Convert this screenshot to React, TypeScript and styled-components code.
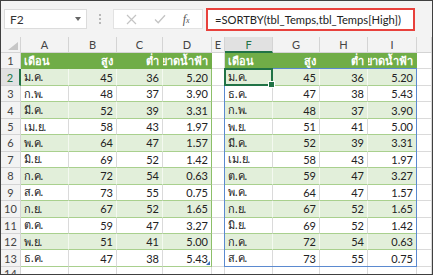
import React from 'react';
import styled, { createGlobalStyle } from 'styled-components';

const GlobalStyle = createGlobalStyle`
  html, body {
    margin: 0;
    padding: 0;
    background: #ffffff;
  }
  body {
    font-family: Lato, "Liberation Sans", "DejaVu Sans", sans-serif;
  }
`;

const GREEN = '#70ad47';
const BAND = '#e2efda';
const BAND_LINE = '#a9d08e';
const GRID = '#dadada';
const SELECT = '#217346';
const SPILL = '#5b8ad0';

type Row = [string, number, number, string];

const leftRows: Row[] = [
  ['ม.ค.', 45, 36, '5.20'],
  ['ก.พ.', 48, 37, '3.90'],
  ['มี.ค.', 52, 39, '3.31'],
  ['เม.ย.', 58, 43, '1.97'],
  ['พ.ค.', 64, 47, '1.57'],
  ['มิ.ย.', 69, 52, '1.42'],
  ['ก.ค.', 72, 54, '0.63'],
  ['ส.ค.', 73, 55, '0.75'],
  ['ก.ย.', 67, 52, '1.65'],
  ['ต.ค.', 59, 47, '3.27'],
  ['พ.ย.', 51, 41, '5.00'],
  ['ธ.ค.', 47, 38, '5.43'],
];

const rightRows: Row[] = [...leftRows].sort((a, b) => a[1] - b[1]);

const headers = ['เดือน', 'สูง', 'ต่ำ', 'หยาดน้ำฟ้า'];
const colLetters = ['A', 'B', 'C', 'D', 'E', 'F', 'G', 'H', 'I', ''];

const Frame = styled.div`
  width: 433px;
  height: 275px;
  box-sizing: border-box;
  border: 1px solid #404040;
  overflow: hidden;
  display: flex;
  flex-direction: column;
  background: #fff;
`;

const Toolbar = styled.div`
  height: 36px;
  flex: 0 0 36px;
  background: #f3f3f3;
  display: flex;
  align-items: center;
  padding-left: 3px;
  box-sizing: border-box;
`;

const NameBox = styled.div`
  width: 83px;
  height: 20px;
  box-sizing: border-box;
  background: #fff;
  border: 1px solid #dcdcdc;
  display: flex;
  align-items: center;
  justify-content: space-between;
  padding: 0 5px 0 5px;
  font-size: 12px;
  color: #333;
`;

const DropArrow = styled.span`
  width: 0;
  height: 0;
  border-left: 3.5px solid transparent;
  border-right: 3.5px solid transparent;
  border-top: 4px solid #666;
`;

const Grip = styled.div`
  width: 26px;
  display: flex;
  flex-direction: column;
  align-items: center;
  gap: 2px;
  span {
    width: 2px;
    height: 2px;
    background: #b8b8b8;
  }
`;

const Buttons = styled.div`
  width: 90px;
  height: 20px;
  box-sizing: border-box;
  background: #fff;
  border: 1px solid #e2e2e2;
  display: flex;
  align-items: center;
  justify-content: space-around;
  padding: 0 4px;
`;

const Fx = styled.span`
  font-family: "Liberation Serif", serif;
  font-style: italic;
  font-size: 12px;
  color: #555;
  sub {
    font-size: 8px;
    vertical-align: baseline;
  }
`;

const FormulaBox = styled.div`
  margin-left: 3px;
  width: 209px;
  height: 23px;
  box-sizing: border-box;
  border: 2px solid #e8413c;
  background: #fff;
  display: flex;
  align-items: center;
  padding-left: 7px;
  font-size: 11.2px;
  color: #222;
  white-space: nowrap;
  overflow: hidden;
`;

const Sheet = styled.div`
  position: relative;
  flex: 1;
  display: grid;
  grid-template-columns: 20px 48px 48px 46px 49px 13px 48px 47px 48px 49px 1fr;
  grid-template-rows: 16px repeat(13, 16.46px) 1fr;
  overflow: hidden;
  font-size: 11px;
  color: #222;
`;

const Corner = styled.div`
  background: #f3f3f3;
  border-right: 1px solid #d4d4d4;
  border-bottom: 1px solid #d4d4d4;
  display: flex;
  align-items: flex-end;
  justify-content: flex-end;
  padding: 0 2px 2px 0;
  box-sizing: border-box;
`;

const CornerTri = styled.span`
  width: 0;
  height: 0;
  border-left: 10px solid transparent;
  border-bottom: 8px solid #c6c6c6;
`;

const ColHead = styled.div<{ $active?: boolean }>`
  background: ${p => (p.$active ? '#e1e1e1' : '#f3f3f3')};
  color: ${p => (p.$active ? SELECT : '#444')};
  border-right: 1px solid #d4d4d4;
  border-bottom: ${p => (p.$active ? `2px solid ${SELECT}` : '1px solid #d4d4d4')};
  box-sizing: border-box;
  display: flex;
  align-items: center;
  justify-content: center;
  font-size: 11px;
`;

const RowHead = styled.div<{ $active?: boolean }>`
  background: ${p => (p.$active ? '#e1e1e1' : '#f3f3f3')};
  color: ${p => (p.$active ? SELECT : '#444')};
  border-right: ${p => (p.$active ? `2px solid ${SELECT}` : '1px solid #d4d4d4')};
  border-bottom: 1px solid #d4d4d4;
  box-sizing: border-box;
  display: flex;
  align-items: center;
  justify-content: center;
  font-size: 11px;
`;

type Kind = 'head' | 'band' | 'plain' | 'empty';

const Cell = styled.div<{ $kind: Kind; $right?: boolean; $edge?: boolean }>`
  position: relative;
  box-sizing: border-box;
  display: flex;
  align-items: center;
  justify-content: ${p => (p.$right ? 'flex-end' : 'flex-start')};
  padding: 0 3px;
  white-space: nowrap;
  overflow: hidden;
  background: ${p => (p.$kind === 'head' ? GREEN : p.$kind === 'band' ? BAND : '#fff')};
  color: ${p => (p.$kind === 'head' ? '#fff' : '#222')};
  font-weight: ${p => (p.$kind === 'head' ? 700 : 400)};
  border-bottom: 1px solid ${p => (p.$kind === 'empty' ? GRID : p.$kind === 'head' ? GREEN : BAND_LINE)};
  border-right: 1px solid
    ${p =>
      p.$edge
        ? '#8cbf69'
        : p.$kind === 'head'
        ? GREEN
        : p.$kind === 'band'
        ? '#f4f9f0'
        : GRID};
`;

/* overlays: absolutely positioned inside their grid area, so they skip auto-placement */
const Selection = styled.div`
  grid-column: 7 / 8;
  grid-row: 3 / 4;
  position: absolute;
  top: -1px;
  left: -1px;
  right: 0;
  bottom: 0;
  border: 2px solid ${SELECT};
  pointer-events: none;
  z-index: 3;
`;

const FillHandle = styled.span`
  position: absolute;
  right: -4px;
  bottom: -4px;
  width: 5px;
  height: 5px;
  background: ${SELECT};
  border: 1px solid #fff;
`;

const Spill = styled.div`
  grid-column: 7 / 11;
  grid-row: 3 / 15;
  position: absolute;
  top: -1px;
  left: -1px;
  right: 0;
  bottom: 0;
  border: 1px solid ${SPILL};
  pointer-events: none;
  z-index: 2;
`;

const ResizeTri = styled.span`
  position: absolute;
  right: 1px;
  bottom: 1px;
  width: 0;
  height: 0;
  border-left: 4px solid transparent;
  border-bottom: 4px solid #3c6fb8;
`;

function tableCells(rows: Row[], r: number, withEdge: boolean, withTri: boolean) {
  if (r === 1) {
    return headers.map((h, i) => (
      <Cell key={`h${i}`} $kind="head" $right={i > 0}>
        {h}
      </Cell>
    ));
  }
  const row = rows[r - 2];
  const kind: Kind = r % 2 === 0 ? 'band' : 'plain';
  return row.map((v, i) => (
    <Cell key={`c${i}`} $kind={kind} $right={i > 0} $edge={withEdge && i === 3}>
      {v}
      {withTri && r === 13 && i === 3 && <ResizeTri />}
    </Cell>
  ));
}

const emptyCells = (n: number) =>
  Array.from({ length: n }, (_, i) => <Cell key={`e${i}`} $kind="empty" />);

export default function App() {
  const rowNums = Array.from({ length: 14 }, (_, i) => i + 1);
  return (
    <>
      <GlobalStyle />
      <Frame>
        <Toolbar>
          <NameBox>
            F2
            <DropArrow />
          </NameBox>
          <Grip>
            <span />
            <span />
            <span />
          </Grip>
          <Buttons>
            <svg width="11" height="11" viewBox="0 0 11 11">
              <path d="M1 1L10 10M10 1L1 10" stroke="#c4c4c4" strokeWidth="1.2" fill="none" />
            </svg>
            <svg width="12" height="10" viewBox="0 0 12 10">
              <path d="M1 5.5L4.2 8.7L11 1.2" stroke="#c4c4c4" strokeWidth="1.3" fill="none" />
            </svg>
            <Fx>
              f<sub>x</sub>
            </Fx>
          </Buttons>
          <FormulaBox>=SORTBY(tbl_Temps,tbl_Temps[High])</FormulaBox>
        </Toolbar>
        <Sheet>
          <Corner>
            <CornerTri />
          </Corner>
          {colLetters.map((c, i) => (
            <ColHead key={i} $active={c === 'F'}>
              {c}
            </ColHead>
          ))}
          {rowNums.map(r => (
            <React.Fragment key={r}>
              <RowHead $active={r === 2}>{r}</RowHead>
              {r <= 13 ? tableCells(leftRows, r, true, true) : emptyCells(4)}
              <Cell $kind="empty" />
              {r <= 13 ? tableCells(rightRows, r, false, false) : emptyCells(4)}
              <Cell $kind="empty" />
            </React.Fragment>
          ))}
          <Spill />
          <Selection>
            <FillHandle />
          </Selection>
        </Sheet>
      </Frame>
    </>
  );
}
